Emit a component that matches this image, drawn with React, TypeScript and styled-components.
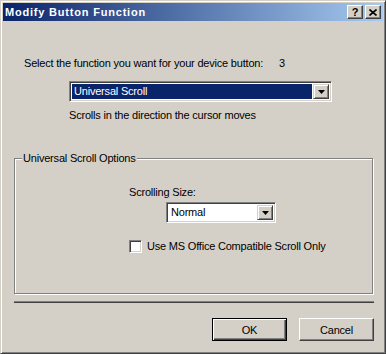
import React from "react";
import styled, { createGlobalStyle } from "styled-components";

const GlobalStyle = createGlobalStyle`
  html, body {
    margin: 0;
    padding: 0;
    background: #d4d0c8;
  }
  body {
    font-family: "Liberation Sans", Arial, sans-serif;
    font-size: 11px;
    letter-spacing: -0.2px;
    color: #000;
  }
`;

const Window = styled.div`
  width: 386px;
  height: 354px;
  box-sizing: border-box;
  background: #d4d0c8;
  border: 1px solid;
  border-color: #d4d0c8 #404040 #404040 #d4d0c8;
  box-shadow: inset 1px 1px 0 #fff, inset -1px -1px 0 #808080;
  padding: 2px;
  display: flex;
  flex-direction: column;
`;

const TitleBar = styled.div`
  height: 18px;
  background: linear-gradient(to right, #0a246a, #a6caf0);
  display: flex;
  align-items: center;
  padding: 0 2px 0 2px;
`;

const TitleText = styled.div`
  flex: 1;
  color: #fff;
  font-weight: bold;
  font-size: 11px;
  letter-spacing: 0.8px;
`;

const CaptionButton = styled.div<{ gap?: number }>`
  width: 16px;
  height: 14px;
  box-sizing: border-box;
  background: #d4d0c8;
  border: 1px solid;
  border-color: #fff #404040 #404040 #fff;
  box-shadow: inset -1px -1px 0 #808080;
  display: flex;
  align-items: center;
  justify-content: center;
  font-weight: bold;
  font-size: 11px;
  letter-spacing: 0;
  line-height: 1;
  margin-left: ${(p) => p.gap ?? 0}px;
`;

const Body = styled.div`
  flex: 1;
  display: flex;
  flex-direction: column;
`;

const Label = styled.div<{ left: number; top: number }>`
  margin-left: ${(p) => p.left}px;
  margin-top: ${(p) => p.top}px;
  line-height: 13px;
  white-space: nowrap;
`;

const PromptRow = styled(Label)`
  display: flex;
  gap: 16px;
`;

const Combo = styled.div<{ left: number; top: number; width: number }>`
  margin-left: ${(p) => p.left}px;
  margin-top: ${(p) => p.top}px;
  width: ${(p) => p.width}px;
  height: 21px;
  box-sizing: border-box;
  border: 1px solid;
  border-color: #808080 #fff #fff #808080;
  box-shadow: inset 1px 1px 0 #404040, inset -1px -1px 0 #d4d0c8;
  background: #fff;
  padding: 2px;
  display: flex;
`;

const ComboValue = styled.div<{ selected?: boolean }>`
  flex: 1;
  background: ${(p) => (p.selected ? "#0a246a" : "#fff")};
  color: ${(p) => (p.selected ? "#fff" : "#000")};
  line-height: 15px;
  padding-left: 2px;
  margin: 0 1px 0 0;
`;

const ArrowButton = styled.div`
  width: 16px;
  box-sizing: border-box;
  background: #d4d0c8;
  border: 1px solid;
  border-color: #d4d0c8 #404040 #404040 #d4d0c8;
  box-shadow: inset 1px 1px 0 #fff, inset -1px -1px 0 #808080;
  display: flex;
  align-items: center;
  justify-content: center;
`;

const GroupBox = styled.div`
  position: relative;
  margin-left: 11px;
  margin-top: 36px;
  width: 359px;
  height: 136px;
  box-sizing: border-box;
  border: 1px solid #808080;
  box-shadow: inset 1px 1px 0 #fff, 1px 1px 0 #fff;
  display: flex;
  flex-direction: column;
`;

const GroupLegend = styled.div`
  position: absolute;
  left: 7px;
  top: -7px;
  padding: 0 1px;
  background: #d4d0c8;
  line-height: 13px;
`;

const CheckRow = styled.div`
  margin-left: 114px;
  margin-top: 17px;
  display: flex;
  align-items: center;
  gap: 5px;
  line-height: 13px;
`;

const CheckBox = styled.div`
  width: 13px;
  height: 13px;
  box-sizing: border-box;
  background: #fff;
  border: 1px solid;
  border-color: #808080 #fff #fff #808080;
  box-shadow: inset 1px 1px 0 #404040, inset -1px -1px 0 #d4d0c8;
`;

const Separator = styled.div`
  margin-left: 11px;
  margin-top: 7px;
  width: 360px;
  height: 2px;
  background: #404040;
  border-top: 1px solid #808080;
  box-sizing: border-box;
`;

const ButtonRow = styled.div`
  display: flex;
  justify-content: flex-end;
  gap: 12px;
  margin-top: 15px;
  padding-right: 9px;
`;

const PushButton = styled.div<{ isDefault?: boolean }>`
  width: 75px;
  height: 23px;
  box-sizing: border-box;
  background: #d4d0c8;
  display: flex;
  align-items: center;
  justify-content: center;
  border: 1px solid;
  border-color: ${(p) =>
    p.isDefault ? "#000" : "#fff #404040 #404040 #fff"};
  box-shadow: ${(p) =>
    p.isDefault
      ? "inset 1px 1px 0 #fff, inset -1px -1px 0 #404040, inset -2px -2px 0 #808080"
      : "inset -1px -1px 0 #808080"};
`;

const DownArrow = () => (
  <svg width="7" height="4" viewBox="0 0 7 4">
    <path d="M0 0h7L3.5 4z" fill="#000" />
  </svg>
);

const CloseGlyph = () => (
  <svg width="8" height="7" viewBox="0 0 8 7">
    <path d="M0.5 0.5L7.5 6.5M7.5 0.5L0.5 6.5" stroke="#000" strokeWidth="1.6" />
  </svg>
);

export default function App() {
  return (
    <>
      <GlobalStyle />
      <Window>
        <TitleBar>
          <TitleText>Modify Button Function</TitleText>
          <CaptionButton>?</CaptionButton>
          <CaptionButton gap={2}>
            <CloseGlyph />
          </CaptionButton>
        </TitleBar>
        <Body>
          <PromptRow left={21} top={36}>
            <span>Select the function you want for your device button:</span>
            <span>3</span>
          </PromptRow>
          <Combo left={66} top={11} width={263}>
            <ComboValue selected>Universal Scroll</ComboValue>
            <ArrowButton>
              <DownArrow />
            </ArrowButton>
          </Combo>
          <Label left={66} top={7}>
            Scrolls in the direction the cursor moves
          </Label>
          <GroupBox>
            <GroupLegend>Universal Scroll Options</GroupLegend>
            <Label left={114} top={27}>
              Scrolling Size:
            </Label>
            <Combo left={151} top={3} width={110}>
              <ComboValue>Normal</ComboValue>
              <ArrowButton>
                <DownArrow />
              </ArrowButton>
            </Combo>
            <CheckRow>
              <CheckBox />
              <span>Use MS Office Compatible Scroll Only</span>
            </CheckRow>
          </GroupBox>
          <Separator />
          <ButtonRow>
            <PushButton isDefault>OK</PushButton>
            <PushButton>Cancel</PushButton>
          </ButtonRow>
        </Body>
      </Window>
    </>
  );
}
